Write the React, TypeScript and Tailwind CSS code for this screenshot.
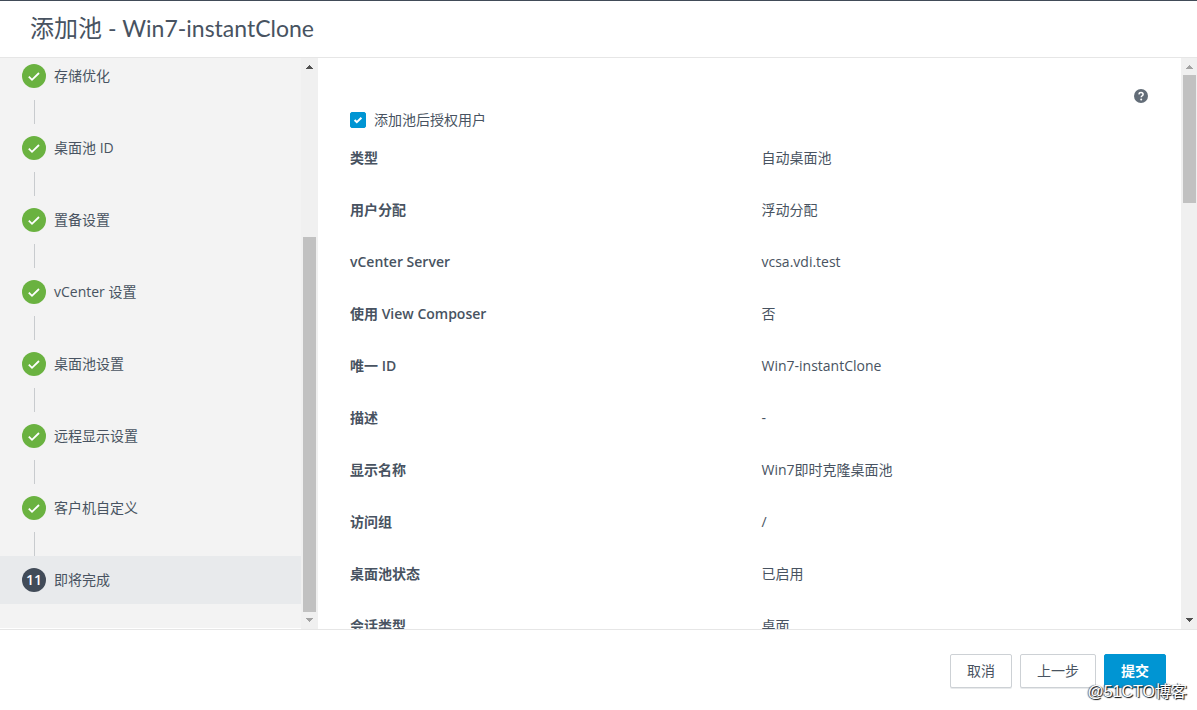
import React, { useState } from 'react';

type Step = {
  id: number;
  label: string;
};

type SummaryRow = {
  label: string;
  value: string;
};

type ScrollBarProps = {
  start: number;
  size: number;
  upActive?: boolean;
  downActive?: boolean;
};

const steps: Step[] = [
  { id: 4, label: '存储优化' },
  { id: 5, label: '桌面池 ID' },
  { id: 6, label: '置备设置' },
  { id: 7, label: 'vCenter 设置' },
  { id: 8, label: '桌面池设置' },
  { id: 9, label: '远程显示设置' },
  { id: 10, label: '客户机自定义' },
  { id: 11, label: '即将完成' },
];

const summary: SummaryRow[] = [
  { label: '类型', value: '自动桌面池' },
  { label: '用户分配', value: '浮动分配' },
  { label: 'vCenter Server', value: 'vcsa.vdi.test' },
  { label: '使用 View Composer', value: '否' },
  { label: '唯一 ID', value: 'Win7-instantClone' },
  { label: '描述', value: '-' },
  { label: '显示名称', value: 'Win7即时克隆桌面池' },
  { label: '访问组', value: '/' },
  { label: '桌面池状态', value: '已启用' },
  { label: '会话类型', value: '桌面' },
];

const CheckIcon = ({ className }: { className: string }) => (
  <svg viewBox="0 0 24 24" className={className} fill="none" stroke="currentColor" strokeWidth="1.8" aria-hidden="true">
    <path d="M6.8 12.6l3.2 3.2 7-6.8" />
  </svg>
);

// start and size are percentages of the track length
const ScrollBar = ({ start, size, upActive, downActive }: ScrollBarProps) => (
  <div className="flex w-4 shrink-0 flex-col bg-[#f0f0f0]" aria-hidden="true">
    <svg viewBox="0 0 16 17" className="h-[17px] w-4 shrink-0" shapeRendering="crispEdges">
      <path d="M4 11h8L8 7z" fill={upActive ? '#505050' : '#a3a3a3'} />
    </svg>
    <div className="min-h-0 flex-1 px-px">
      <div style={{ height: `${start}%` }} />
      <div className="ml-px bg-[#c1c1c1]" style={{ height: `${size}%` }} />
    </div>
    <svg viewBox="0 0 16 17" className="h-[17px] w-4 shrink-0" shapeRendering="crispEdges">
      <path d="M4 6h8l-4 4z" fill={downActive ? '#505050' : '#a3a3a3'} />
    </svg>
  </div>
);

const StepItem = ({ step, active }: { step: Step; active: boolean }) => (
  <li className="shrink-0">
    <a
      href={`#step-${step.id}`}
      aria-current={active ? 'step' : undefined}
      className={`flex h-12 items-center gap-2 pl-[22px] text-sm ${active ? 'bg-[#e8eaec]' : ''}`}
    >
      {active ? (
        <span className="flex size-6 items-center justify-center rounded-full bg-[#414b58] text-sm font-semibold text-white">{step.id}</span>
      ) : (
        <span className="flex size-6 items-center justify-center rounded-full bg-[#6ab240] text-white">
          <CheckIcon className="size-6" />
        </span>
      )}
      <span>{step.label}</span>
    </a>
    {!active && <div className="ml-[34px] h-6 w-px bg-[#c8cbce]" />}
  </li>
);

const App = () => {
  const [entitle, setEntitle] = useState(true);
  const activeStep = 11;

  const buttonClasses = 'h-[34px] rounded-xs border px-4 text-sm shadow-[0_1px_0_#e8eaec]';

  return (
    <div className="flex h-screen flex-col overflow-hidden border-t border-[#414b58] bg-white font-['Open_Sans','Noto_Sans_CJK_SC',sans-serif] text-[#485361]">
      <header className="flex h-[57px] shrink-0 items-center border-b border-[#e6e6e6] px-[30px]">
        <h1 className="pb-0.5 font-['Lato','Noto_Sans_CJK_SC',sans-serif] text-2xl font-normal">
          添加池
          <span className="text-[23px]"> - Win7-instantClone</span>
        </h1>
      </header>

      <div className="flex min-h-0 flex-1">
        <nav className="flex w-[318px] shrink-0 bg-[#f0f0f0] pr-px" aria-label="添加池">
          <ol className="flex min-w-0 flex-1 flex-col justify-end overflow-hidden border-b border-white bg-[#f3f3f3] pb-6">
            {steps.map(step => (
              <StepItem key={step.id} step={step} active={step.id === activeStep} />
            ))}
          </ol>
          <ScrollBar start={30.2} size={69.8} upActive />
        </nav>

        <main className="min-w-0 flex-1 overflow-hidden pt-8 pr-2 pl-8">
          <div className="flex h-3 items-center justify-end pr-6">
            <button type="button" aria-label="帮助" className="mr-px">
              <svg viewBox="0 0 14 14" className="size-[14px]" fill="none" aria-hidden="true">
                <circle cx="7" cy="7" r="7" fill="#636d78" />
                <path d="M4.9 5.4C5 4.1 5.8 3.6 7 3.6s2.1.7 2.1 1.8c0 1.3-1.9 1.4-1.9 2.9" stroke="#fff" strokeWidth="1.5" />
                <circle cx="7.2" cy="10.4" r="1" fill="#fff" />
              </svg>
            </button>
          </div>
          <label className="mt-2 flex h-5 w-fit items-center gap-2 text-sm">
            <input type="checkbox" checked={entitle} onChange={e => setEntitle(e.target.checked)} className="peer sr-only" />
            <span className="flex size-4 items-center justify-center rounded-xs border border-[#0095d3] bg-white text-white peer-checked:bg-[#0095d3]">
              <svg viewBox="0 0 16 16" className="size-4 shrink-0" fill="none" stroke="currentColor" strokeWidth="2" aria-hidden="true">
                <path d="M4.6 8l2.2 2.2 4.6-4.5" />
              </svg>
            </span>
            添加池后授权用户
          </label>
          <table className="mt-[18px] w-full table-fixed text-left text-sm leading-5">
            <tbody>
              {summary.map(row => (
                <tr key={row.label} className="h-[52px] align-top">
                  <th scope="row" className="font-semibold">{row.label}</th>
                  <td>{row.value}</td>
                </tr>
              ))}
            </tbody>
          </table>
        </main>
        <ScrollBar start={0} size={23.8} downActive />
      </div>

      <footer className="relative flex h-[81px] shrink-0 items-start justify-end gap-2 border-t border-[#e6e6e6] pt-6 pr-[31px]">
        <button type="button" className={`${buttonClasses} border-[#cdd1d5] bg-white`}>取消</button>
        <button type="button" className={`${buttonClasses} border-[#cdd1d5] bg-white`}>上一步</button>
        <button type="button" className={`${buttonClasses} border-[#0095d3] bg-[#0095d3] font-semibold text-white`}>提交</button>
        <span className="absolute right-2.5 bottom-2 font-['Liberation_Sans','Noto_Sans_CJK_SC',sans-serif] text-base leading-5 text-white [text-shadow:1px_1px_1px_#000,-1px_0_1px_#555]">
          @51CTO博客
        </span>
      </footer>
    </div>
  );
};

export default App;
